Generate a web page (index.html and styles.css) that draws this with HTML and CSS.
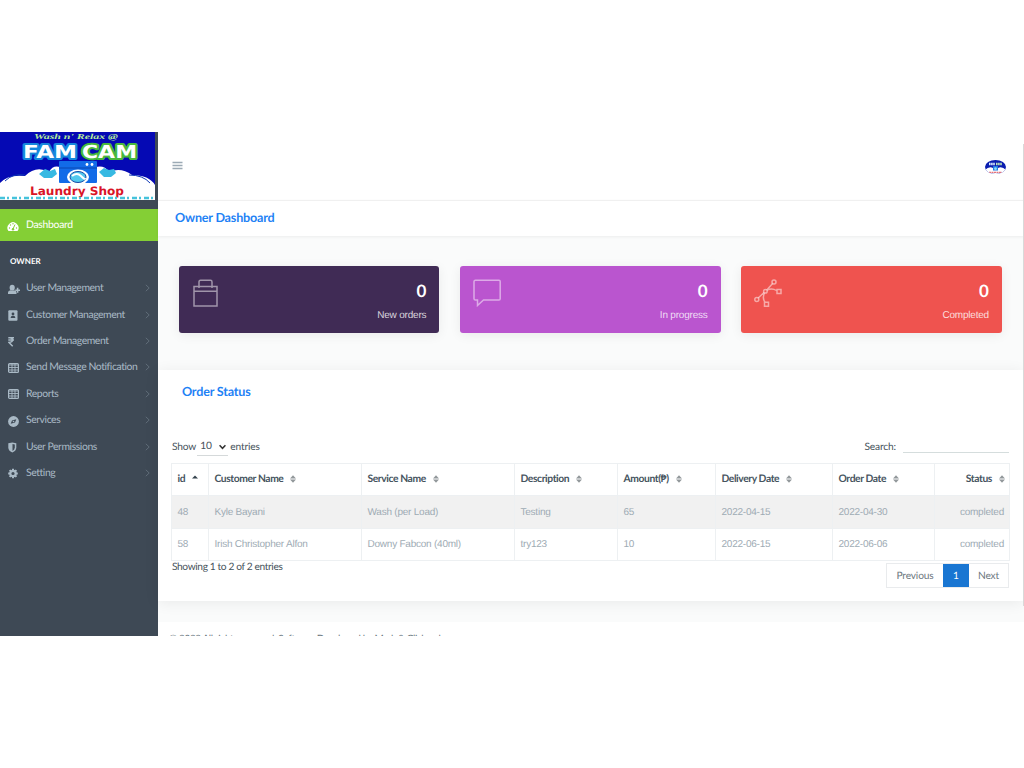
FILE: index.html
```html
<!DOCTYPE html>
<html lang="en">
<head>
<meta charset="utf-8">
<title>Owner Dashboard</title>
<link rel="stylesheet" href="styles.css">
</head>
<body>
<svg class="defs" width="0" height="0">
  <symbol id="logo" viewBox="0 0 155 68" preserveAspectRatio="none">
    <rect width="155" height="68" fill="#0509b4"/>
    <path d="M0 68V51Q8 42 25 44Q36 33 49 40Q54 31 64 37L91 37Q103 31 109 40Q121 35 132 43Q149 43 155 53V68Z" fill="#fff"/>
    <path d="M5 49Q13 41 25 43M129 43Q143 43 150 51" fill="none" stroke="#0d37b5" stroke-width="1"/>
    <path d="M39 42l6-5 5 2 5-2 2 5-5 4-8 0zM99 40l5-4 5 2 5-1 2 4-5 4-7 0z" fill="#37b9e2"/>
    <rect x="59" y="29" width="38" height="22" rx="1" fill="#126be8"/>
    <path d="M59 36H97" stroke="#0947b2"/>
    <circle cx="87" cy="32.500" r="1.400" fill="#fff"/><circle cx="92" cy="32.500" r="1.400" fill="#fff"/>
    <ellipse cx="78" cy="45" rx="11" ry="7.500" fill="#fff"/><ellipse cx="78" cy="45" rx="8" ry="5.500" fill="#52c8ed" stroke="#174aa8"/>
    <path d="M72 44q5-4 9 0t4 2" fill="none" stroke="#fff" stroke-width="2"/>
    <text x="34" y="7" textLength="84" lengthAdjust="spacingAndGlyphs" class="logo-script">Wash n' Relax @</text>
    <text x="23" y="25.500" textLength="54" lengthAdjust="spacingAndGlyphs" class="logo-name logo-blue">FAM</text>
    <text x="82" y="25.500" textLength="55" lengthAdjust="spacingAndGlyphs" class="logo-name logo-green">CAM</text>
    <text x="30" y="63" textLength="94" lengthAdjust="spacingAndGlyphs" class="logo-shop">Laundry Shop</text>
    <path d="M0 66H155" stroke="#46c3dc" stroke-width="2.500" stroke-dasharray="5 2 2 3"/>
  </symbol>
  <symbol id="badge" viewBox="0 0 21 14">
    <rect width="21" height="14" fill="#0a1db0"/>
    <path d="M0 14V10Q4 6 8 8H13Q17 6 21 10V14Z" fill="#fff"/>
    <path d="M4 4H10" stroke="#d7ecff" stroke-width="2.400" stroke-dasharray="1.600 .5"/>
    <path d="M11 4H17" stroke="#bfe8b5" stroke-width="2.400" stroke-dasharray="1.600 .5"/>
    <rect x="8" y="6" width="5" height="4.500" fill="#1c7be5"/><circle cx="10.500" cy="8.700" r="1.400" fill="#8fdcf5"/>
    <path d="M4 12.300H17" stroke="#e2727c" stroke-width="1.300" stroke-dasharray="2 .5"/>
  </symbol>
  <symbol id="grid" viewBox="0 0 11 10"><rect x=".6" y=".6" width="9.800" height="8.800" rx="1" fill="none" stroke="currentColor" stroke-width="1.200"/><path d="M1 2H10M1 4.500H10M1 7H10M4 1V9M7 1V9" stroke="currentColor" stroke-width=".9"/></symbol>
  <symbol id="chev" viewBox="0 0 5 8"><path d="M.8.8L4.200 4L.8 7.200" fill="none" stroke="currentColor" stroke-width=".8"/></symbol>
  <symbol id="sort" viewBox="0 0 6 8"><path d="M0 3.500L3 .3L6 3.500ZM0 4.500H6L3 7.700Z" fill="currentColor"/></symbol>
</svg>
<div class="app">
  <aside class="sidebar">
    <svg class="brand"><use href="#logo"/></svg>
    <nav>
      <a class="item active"><svg class="ico" viewBox="0 0 12 11"><path d="M1.500 10A5.500 5.500 0 1 1 10.500 10Z" fill="currentColor"/><path d="M6 8L8 3.500" stroke="#84cf35"/><g fill="#84cf35"><circle cx="2.500" cy="7" r=".7"/><circle cx="3.500" cy="4" r=".7"/><circle cx="6" cy="2.800" r=".7"/><circle cx="9.500" cy="7" r=".7"/><circle cx="6" cy="8.300" r="1.200"/></g></svg><span>Dashboard</span></a>
      <h2 class="group">OWNER</h2>
      <a class="item"><svg class="ico" viewBox="0 0 12 11"><ellipse cx="4.200" cy="3.700" rx="2.600" ry="3" fill="currentColor"/><path d="M0 10V8.500Q0 6.500 2.500 6.200Q4.200 7.500 6 6.200Q8.500 6.500 8.500 8.500V10Z" fill="currentColor"/><path d="M9.600 3.800V8.800M7.300 6.300H12" stroke="currentColor" stroke-width="1.600"/></svg><span>User Management</span><svg class="chev"><use href="#chev"/></svg></a>
      <a class="item"><svg class="ico" viewBox="0 0 12 11"><rect x=".3" y=".3" width="9.200" height="10.400" rx="1" fill="currentColor"/><circle cx="5" cy="4" r="1.400" fill="#3e4955"/><path d="M2.600 8Q2.600 5.800 5 5.800T7.400 8Z" fill="#3e4955"/></svg><span>Customer Management</span><svg class="chev"><use href="#chev"/></svg></a>
      <a class="item"><svg class="ico" viewBox="0 0 12 11"><path d="M.3 1.700H6M.3 4.100H6M.3 1.700H2Q4.500 1.800 4.500 4T1 6.400L4.700 10.300" fill="none" stroke="currentColor" stroke-width="1.500"/></svg><span>Order Management</span><svg class="chev"><use href="#chev"/></svg></a>
      <a class="item"><svg class="ico" viewBox="0 0 12 11"><use href="#grid" width="11" height="10"/></svg><span>Send Message Notification</span><svg class="chev"><use href="#chev"/></svg></a>
      <a class="item"><svg class="ico" viewBox="0 0 12 11"><use href="#grid" width="11" height="10"/></svg><span>Reports</span><svg class="chev"><use href="#chev"/></svg></a>
      <a class="item"><svg class="ico" viewBox="0 0 12 11"><circle cx="5.500" cy="5.500" r="5.400" fill="currentColor"/><path d="M2.700 7.700L4 4.400L8.300 3.300L7 6.600Z" fill="#3e4955"/><circle cx="5.500" cy="5.500" r=".8" fill="currentColor"/></svg><span>Services</span><svg class="chev"><use href="#chev"/></svg></a>
      <a class="item"><svg class="ico" viewBox="0 0 12 11"><path d="M.3 1.300L4.300.5L8.300 1.300V5.500Q8.300 8.800 4.300 10.500Q.3 8.800.3 5.500Z" fill="currentColor"/><path d="M4.500 2L6.800 2.400V5.500Q6.700 7.700 4.500 8.900Z" fill="#3e4955"/></svg><span>User Permissions</span><svg class="chev"><use href="#chev"/></svg></a>
      <a class="item"><svg class="ico" viewBox="0 0 12 11"><circle cx="5" cy="5.500" r="2.700" fill="none" stroke="currentColor" stroke-width="2.200"/><path d="M5 .7V2.500M5 8.500V10.300M.2 5.500H2M8 5.500H9.800M1.600 2.100L2.800 3.300M7.200 7.700L8.400 8.900M8.400 2.100L7.200 3.300M2.800 7.700L1.600 8.900" stroke="currentColor" stroke-width="2"/></svg><span>Setting</span><svg class="chev"><use href="#chev"/></svg></a>
    </nav>
  </aside>
  <main class="main">
    <header class="topbar">
      <svg class="burger" viewBox="0 0 10 9"><path d="M0 1.500H10M0 4.500H10M0 7.500H10" stroke="#9caab5" stroke-width="1.300"/></svg>
      <svg class="avatar"><use href="#badge"/></svg>
    </header>
    <div class="titlebar"><h1>Owner Dashboard</h1></div>
    <section class="cards">
      <article class="card dark"><svg class="card-ico" viewBox="0 0 28 28"><path d="M2 7.500H25V27H2ZM2 12.200H25M7 9V3Q7 1.300 8.500 1.300H18.500Q20 1.300 20 3V9"/></svg><div class="stat"><strong>0</strong><span>New orders</span></div></article>
      <article class="card violet"><svg class="card-ico" viewBox="0 0 28 28"><path d="M2.500 1.200H26Q27.200 1.200 27.200 2.500V19.700Q27.200 21 26 21H10.500L4.500 26.500V21H2.500Q1 21 1 19.700V2.500Q1 1.200 2.500 1.200Z"/></svg><div class="stat"><strong>0</strong><span>In progress</span></div></article>
      <article class="card red"><svg class="card-ico" viewBox="0 0 28 28"><circle cx="20" cy="3" r="2"/><circle cx="2.800" cy="20.500" r="2"/><circle cx="11.400" cy="12.200" r="1.800"/><path d="M4.200 19L10 13.500M12.800 11L18.600 4.500M13 11.200Q18 8.500 22.500 11.500M10.500 14Q8 19 11 23.200M23 10.500H27V14.500H23ZM10.500 23.200H14.500V27.200H10.500Z"/></svg><div class="stat"><strong>0</strong><span>Completed</span></div></article>
    </section>
    <section class="panel">
      <h2>Order Status</h2>
      <div class="tools">
        <div class="length">Show <span class="select">10<svg viewBox="0 0 6 5"><path d="M.5 1L3 3.600L5.500 1" fill="none" stroke="#333" stroke-width="1.300"/></svg></span> entries</div>
        <label class="search">Search: <input type="text" aria-label="Search"></label>
      </div>
      <table>
        <colgroup><col class="c1"><col class="c2"><col class="c3"><col class="c4"><col class="c5"><col class="c6"><col class="c7"><col class="c8"></colgroup>
        <thead><tr><th>id<svg class="sort"><path d="M0 3.500L3 .5L6 3.500Z" fill="#34434d"/></svg></th><th>Customer Name<svg class="sort"><use href="#sort"/></svg></th><th>Service Name<svg class="sort"><use href="#sort"/></svg></th><th>Description<svg class="sort"><use href="#sort"/></svg></th><th>Amount(₱)<svg class="sort"><use href="#sort"/></svg></th><th>Delivery Date<svg class="sort"><use href="#sort"/></svg></th><th>Order Date<svg class="sort"><use href="#sort"/></svg></th><th class="end">Status<svg class="sort"><use href="#sort"/></svg></th></tr></thead>
        <tbody>
          <tr class="odd"><td>48</td><td>Kyle Bayani</td><td>Wash (per Load)</td><td>Testing</td><td>65</td><td>2022-04-15</td><td>2022-04-30</td><td class="end">completed</td></tr>
          <tr><td>58</td><td>Irish Christopher Alfon</td><td>Downy Fabcon (40ml)</td><td>try123</td><td>10</td><td>2022-06-15</td><td>2022-06-06</td><td class="end">completed</td></tr>
        </tbody>
      </table>
      <div class="bottom"><span>Showing 1 to 2 of 2 entries</span><div class="pager"><a class="prev">Previous</a><a class="current">1</a><a class="next">Next</a></div></div>
    </section>
    <footer>© 2022 All rights reserved. Software Developed by Mark &amp; Clickmaker</footer>
  </main>
  <div class="scroll"></div>
</div>
</body>
</html>
```
FILE: styles.css
```css
* { box-sizing: border-box; }
body { margin: 0; padding-top: 132px; background: #fff; font-family: Lato, sans-serif; font-size: 10.2px; text-rendering: geometricPrecision; }
h1, h2 { margin: 0; }
.defs { position: absolute; }
.app { display: flex; height: 504px; overflow: hidden; }

.sidebar { width: 158px; flex: none; background: #3e4955; color: #a9b9c5; }
.brand { display: block; width: 155px; height: 68px; margin-bottom: 9px; }
.logo-script { font: italic bold 7.5px "Liberation Serif", serif; fill: #b9ee9c; }
.logo-name { font: bold 18px "DejaVu Sans", sans-serif; fill: #fff; stroke-width: 4px; stroke-linejoin: round; paint-order: stroke; }
.logo-blue { stroke: #1687dc; }
.logo-green { stroke: #48b83d; }
.logo-shop { font: bold 11.5px "DejaVu Sans", sans-serif; fill: #d91426; }
.item { display: flex; align-items: center; height: 26.4px; padding: 0 8px; }
.item.active { height: 32px; background: #84cf35; color: #fff; }
.ico { width: 12px; height: 11px; margin: 2px 7px 0 -1px; flex: none; }
.item:not(.active) .ico { margin: 2px 6px 0 0; }
.item span { font-size: 10.4px; line-height: 14px; letter-spacing: -.42px; white-space: nowrap; }
.item.active span { letter-spacing: -.3px; }
.chev { width: 5px; height: 8px; margin-left: auto; color: #687682; flex: none; }
.group { height: 34px; padding: 0 10px; color: #fff; font-size: 8px; line-height: 40px; }

.main { flex: 1; min-width: 0; background: #fafbfb; }
.topbar { display: flex; justify-content: space-between; align-items: center; height: 68px; padding: 0 18px 0 14px; background: #fff; }
.burger { width: 11px; height: 9px; margin-bottom: 1px; }
.avatar { width: 21px; height: 14px; border-radius: 50%; margin-top: 2px; }
.titlebar { height: 36px; padding-left: 17px; border-top: 1px solid #f0f0f0; background: #fff; box-shadow: 0 1px 3px rgba(0,0,0,.06); }
h1 { color: #1f82f5; font-size: 12.6px; line-height: 33px; letter-spacing: -.2px; }
.cards { display: flex; gap: 20.5px; padding: 30px 22px 37px 20.5px; }
.card { flex: 1; height: 67px; border-radius: 3px; display: flex; justify-content: space-between; padding: 13px 13px 0; box-shadow: 0 2px 12px rgba(0,0,0,.07); }
.dark { background: #402b55; }
.violet { background: #ba55cf; }
.red { background: #ef534f; }
.card-ico { width: 28px; height: 28px; fill: none; stroke: rgba(255,255,255,.5); stroke-width: 1.5; }
.stat { text-align: right; color: #fff; }
.stat strong { display: block; font-size: 17px; line-height: 23px; }
.stat span { display: block; margin-top: 6px; font: 10px/15px "Liberation Sans", sans-serif; letter-spacing: -.2px; color: rgba(255,255,255,.8); }

.panel { height: 231px; margin-right: 1px; padding: 0 14px 0 13px; background: #fff; box-shadow: 0 2px 14px rgba(0,0,0,.07); color: #46525b; letter-spacing: -.38px; }
.panel h2 { padding-left: 11px; color: #1f82f5; font-size: 12.6px; letter-spacing: -.2px; line-height: 43px; height: 67px; }
.tools { display: flex; justify-content: space-between; height: 26px; line-height: 20px; letter-spacing: -.15px; }
.length, .search { display: flex; }
.length { padding-left: 1px; }
.select { display: flex; justify-content: space-between; align-items: center; width: 31px; height: 19px; margin: 0 2px 0 1px; padding: 0 2px 0 3px; border-bottom: 1px solid #d5d9da; }
.select svg { width: 7px; height: 6px; margin-top: 2px; }
.search input { width: 106px; height: 16px; margin-left: 7px; padding: 0; border: 0; border-bottom: 1px solid #d5dddd; background: transparent; }
table { width: 838px; table-layout: fixed; border-collapse: collapse; }
.c1 { width: 37px; } .c2 { width: 153px; } .c3 { width: 153px; } .c4 { width: 103px; }
.c5 { width: 98px; } .c6 { width: 117px; } .c7 { width: 102px; } .c8 { width: 75px; }
th, td { height: 32.3px; padding: 0 5px 0 5.5px; border: 1px solid #edf0f2; text-align: left; white-space: nowrap; }
th { font-size: 10.3px; font-weight: 700; letter-spacing: -.4px; color: #46545e; padding-bottom: 1.5px; }
td { padding-top: 1px; font: 10px "Liberation Sans", sans-serif; letter-spacing: -.23px; color: #9eabb4; }
.odd td { background: #f1f1f1; }
th.end, td.end { text-align: right; }
.sort { width: 6px; height: 8px; margin-left: 7px; vertical-align: -1px; color: #92989b; }
.end .sort { margin-right: -1px; }
.bottom { display: flex; justify-content: space-between; line-height: 13px; }
.bottom > span { padding-left: 1px; }
.pager { display: flex; height: 25px; margin-top: 2px; border: 1px solid #e9ebed; line-height: 24px; text-align: center; letter-spacing: -.15px; color: #6d7880; }
.prev { width: 56px; }
.current { width: 26px; background: #1976d2; color: #fff; }
.next { width: 39px; }
footer { height: 40px; margin-top: 21px; padding: 10px 11px 0; background: #fff; font-size: 10px; line-height: 14px; letter-spacing: -.4px; color: #67757c; white-space: nowrap; }
.scroll { width: 1px; height: 462px; margin: 12px 0 0 -1px; background: #d9d9d9; position: relative; }
```
